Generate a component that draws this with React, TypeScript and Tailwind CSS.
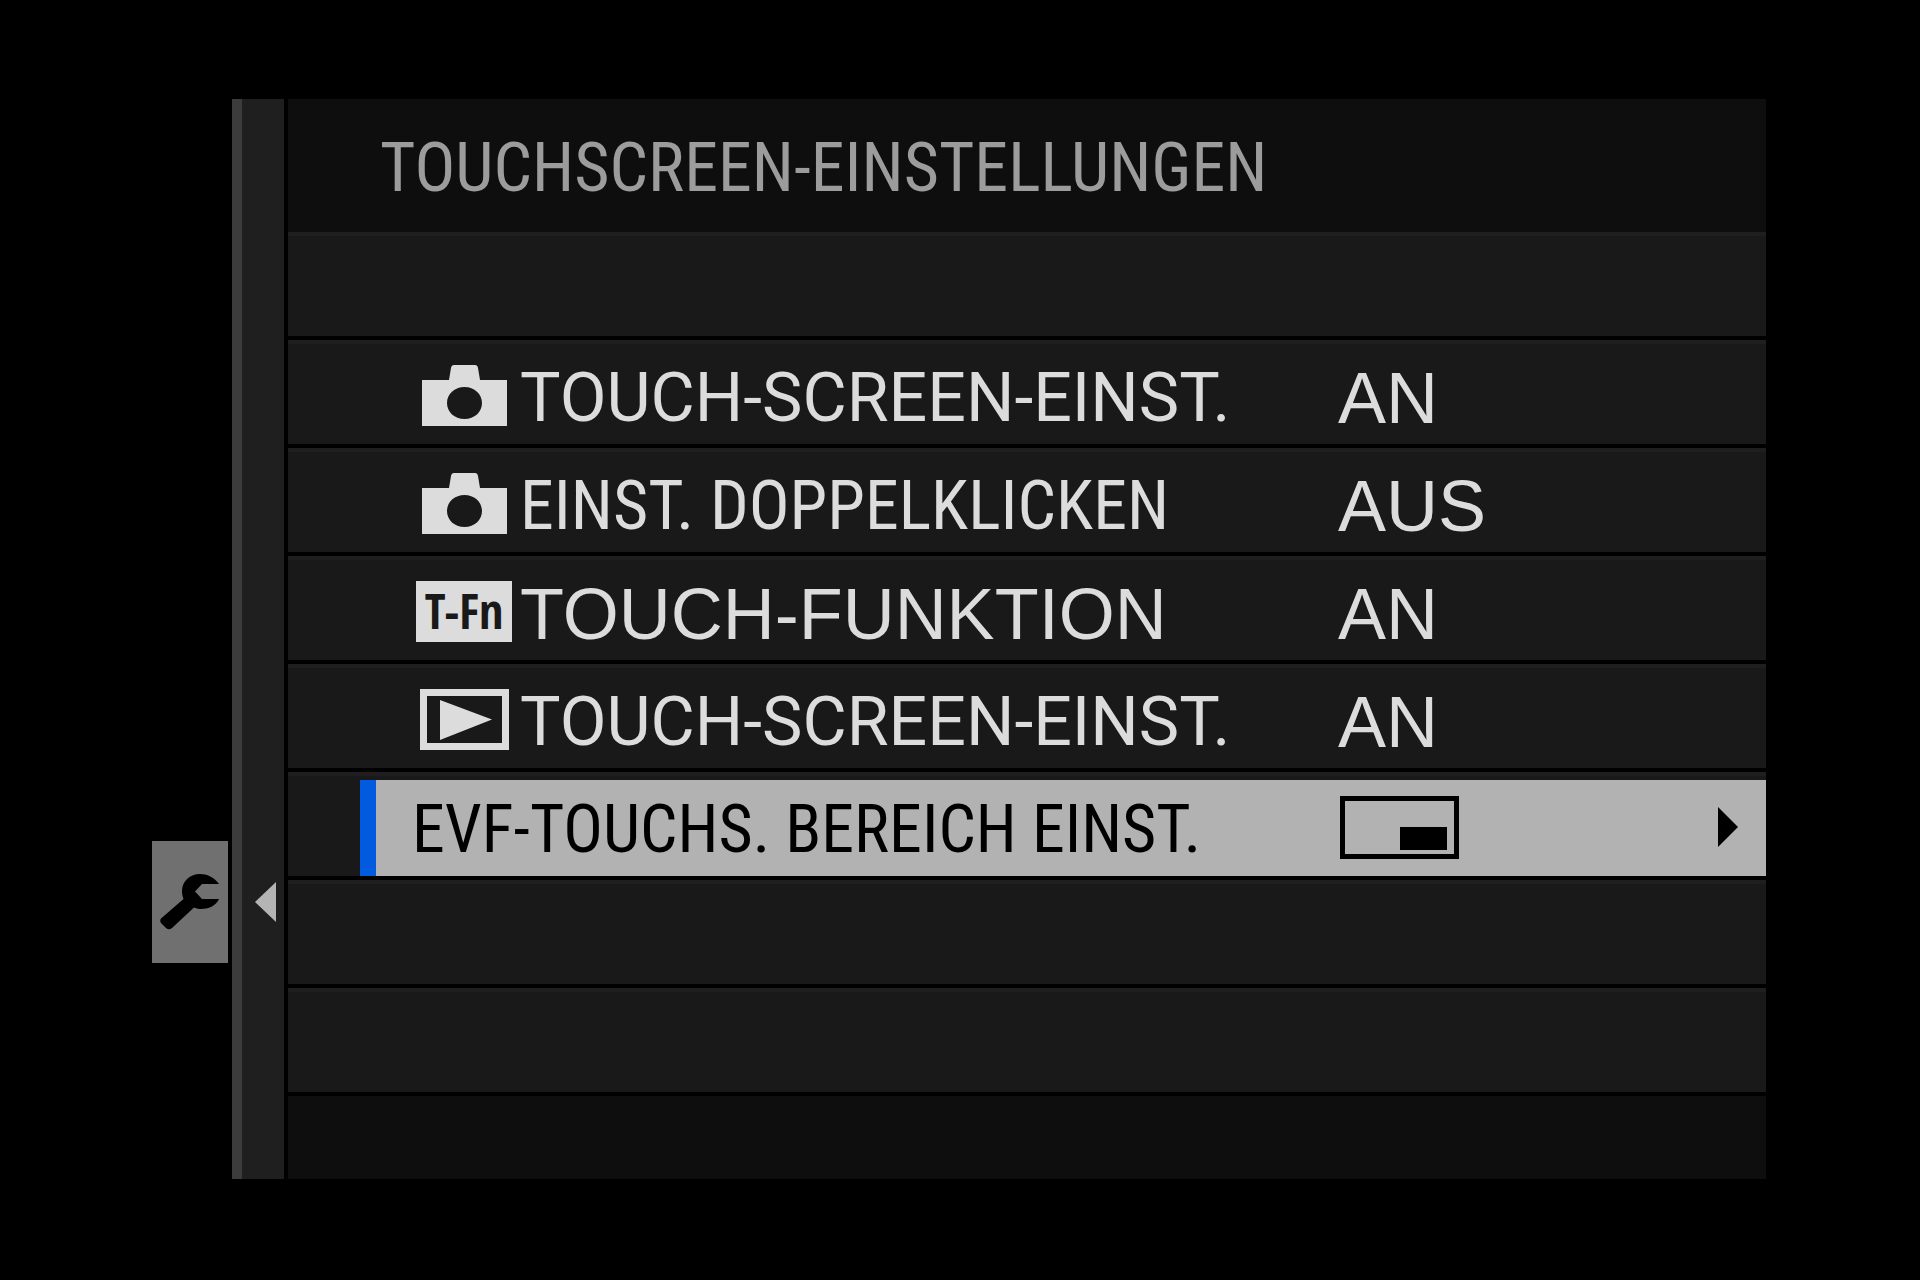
import type { ReactNode } from 'react'

const condensed = "font-['Roboto_Condensed','Roboto',sans-serif]"
const medium = "font-['Roboto',sans-serif]"
const wide = "font-['Liberation_Sans',Arial,sans-serif]"

const CameraIcon = () => (
  <svg width="85" height="61" viewBox="0 0 85 61" fill="currentColor" aria-hidden="true">
    <path
      fillRule="evenodd"
      d="M0 15H27L29 3Q29.500 0 32 0H53Q55.500 0 56 3L58 15H85V61H0ZM42.500 22C32.500 22 25 29 25 38S32.500 54 42.500 54S60 47 60 38S52.500 22 42.500 22Z"
    />
  </svg>
)

const PlaybackIcon = () => (
  <svg width="89" height="61" viewBox="0 0 89 61" aria-hidden="true">
    <rect x="3.500" y="3.500" width="82" height="54" fill="none" stroke="currentColor" strokeWidth="7" />
    <path d="M20 11L72 30.500L20 51Z" fill="currentColor" />
  </svg>
)

const TouchFnBadge = () => (
  <span className="flex h-[61px] w-24 items-center justify-center bg-[#dcdcdc] font-['Open_Sans_Condensed','Roboto_Condensed',sans-serif] text-[48px] leading-none font-bold text-[#191919]">
    T-Fn
  </span>
)

const AreaIcon = () => (
  <svg className="ml-0.5" width="119" height="63" viewBox="0 0 119 63" role="img" aria-label="Unten rechts">
    <rect x="2.500" y="2.500" width="114" height="58" fill="none" stroke="currentColor" strokeWidth="5" />
    <rect x="60" y="31" width="47" height="23" fill="currentColor" />
  </svg>
)

const WrenchIcon = () => (
  <svg width="60" height="56" viewBox="0 0 60 56" fill="currentColor" aria-hidden="true">
    <path d="M59 10C54 3 47 0 40 0C29 0 22 8 22 17C22 20 22.500 22.500 23.500 25L1 44.500Q-.5 46.500 1 49L6 54Q9 56.500 12 54L34 33.500C37 34.500 39 35 41 35C48 35 56 32 59 25H42L35 17.500L42 10Z" />
  </svg>
)

type Item = {
  icon?: ReactNode
  label: string
  value: ReactNode
  font: string
  selected?: boolean
}

const items: (Item | null)[] = [
  null,
  { icon: <CameraIcon />, label: 'TOUCH-SCREEN-EINST.', value: 'AN', font: `text-[68px] ${medium}` },
  { icon: <CameraIcon />, label: 'EINST. DOPPELKLICKEN', value: 'AUS', font: `text-[68px] ${condensed}` },
  { icon: <TouchFnBadge />, label: 'TOUCH-FUNKTION', value: 'AN', font: `text-[72px] ${wide}` },
  { icon: <PlaybackIcon />, label: 'TOUCH-SCREEN-EINST.', value: 'AN', font: `text-[68px] ${medium}` },
  { label: 'EVF-TOUCHS. BEREICH EINST.', value: <AreaIcon />, font: `text-[66px] ${condensed}`, selected: true },
  null,
  null,
]

function Row({ item }: { item: Item }) {
  return (
    <button
      type="button"
      aria-current={item.selected}
      className={`ml-[72px] flex h-24 flex-1 items-center border-l-16 text-left whitespace-nowrap ${
        item.selected ? 'border-[#005bdf] bg-[#b2b2b2] text-black' : 'border-transparent text-[#dcdcdc]'
      }`}
    >
      {item.icon && <span className="ml-10 flex w-24 justify-center pb-0.5">{item.icon}</span>}
      <span className={`flex-1 pt-1 leading-none ${item.icon ? 'pl-2' : 'pl-9'} ${item.font}`}>{item.label}</span>
      <span className={`flex w-[428px] items-center text-[72px] leading-none ${item.selected ? 'pb-0.5' : 'pt-1'} ${wide}`}>
        {item.value}
        {item.selected && (
          <svg className="mr-7 ml-auto" width="20" height="40" viewBox="0 0 20 40" fill="currentColor" aria-hidden="true">
            <path d="M0 0L20 20L0 40Z" />
          </svg>
        )}
      </span>
    </button>
  )
}

export default function App() {
  return (
    <main className="flex min-h-screen items-start bg-black pt-[99px] pr-[154px]">
      {/* Menu tabs */}
      <nav className="flex w-[232px] shrink-0 justify-end pt-[742px] pr-1">
        <button
          type="button"
          aria-label="Einrichtung"
          className="flex h-[122px] w-19 items-center justify-center bg-[#707070] text-black"
        >
          <WrenchIcon />
        </button>
      </nav>

      <section className="flex flex-1 bg-[#0e0e0e]">
        {/* Back strip */}
        <div className="flex w-14 shrink-0 justify-center border-r-4 border-l-10 border-r-black border-l-[#3c3c3c] bg-[#1f1f1f] pt-[783px] pl-1">
          <button type="button" aria-label="Zurück" className="h-10 text-[#b4b4b4]">
            <svg width="21" height="40" viewBox="0 0 21 40" fill="currentColor">
              <path d="M21 0L0 20L21 40Z" />
            </svg>
          </button>
        </div>

        <div className="flex-1">
          <header className="flex h-[133px] items-center pl-[92px]">
            <h1 className={`pt-1 text-[68px] leading-none whitespace-nowrap text-[#9c9c9c] ${condensed}`}>
              TOUCHSCREEN-EINSTELLUNGEN
            </h1>
          </header>
          <ul>
            {items.map((item, i) => (
              <li
                key={i}
                className="flex h-[108px] items-end border-t-4 border-b-4 border-t-[#1f1f1f] border-b-black bg-[#191919]"
              >
                {item && <Row item={item} />}
              </li>
            ))}
          </ul>
          <div className="h-[83px]" />
        </div>
      </section>
    </main>
  )
}
